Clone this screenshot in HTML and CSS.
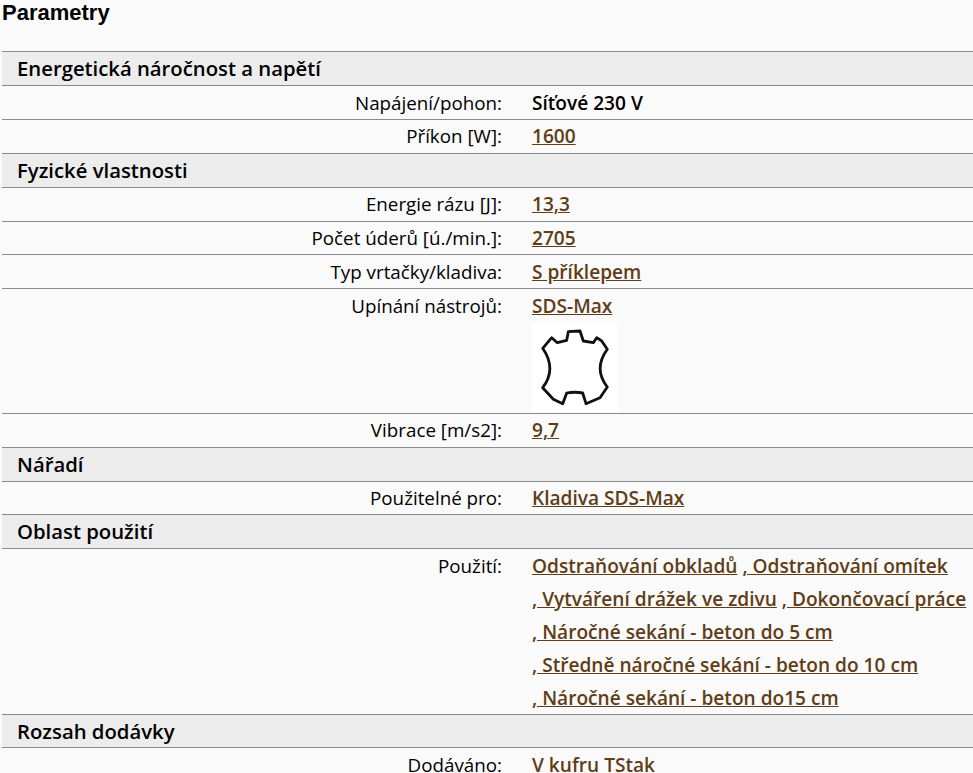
FILE: index.html
```html
<!DOCTYPE html>
<html lang="cs">
<head>
<meta charset="utf-8">
<title>Parametry</title>
<link rel="stylesheet" href="styles.css">
</head>
<body>
<h2 class="title">Parametry</h2>
<div class="params">
<div class="group">Energetická náročnost a napětí</div>
<div class="row"><div class="label">Napájení/pohon:</div><div class="value">Síťové 230 V</div></div>
<div class="row"><div class="label">Příkon [W]:</div><div class="value"><a href="#">1600</a></div></div>
<div class="group">Fyzické vlastnosti</div>
<div class="row"><div class="label">Energie rázu [J]:</div><div class="value"><a href="#">13,3</a></div></div>
<div class="row"><div class="label">Počet úderů [ú./min.]:</div><div class="value"><a href="#">2705</a></div></div>
<div class="row"><div class="label">Typ vrtačky/kladiva:</div><div class="value"><a href="#">S příklepem</a></div></div>
<div class="row row-image"><div class="label">Upínání nástrojů:</div><div class="value"><a href="#">SDS-Max</a>
<svg class="shank" width="86" height="89" viewBox="0 0 86 89" role="img" aria-label="SDS-Max">
<rect width="86" height="89" fill="#fff"/>
<path class="shank-line" d="M36.3 8.7 L48 8 L51.3 18 L61.3 19.7 L64.7 14.7 L69.7 18 L75.3 26.3 Q61 46 75.3 64 L68 74.7 L54 80.7 L50.7 70 Q42.5 68.5 34.7 70 L30.7 80.7 L21.3 76.3 L10.7 64.7 Q25 46 10.7 25.3 L19.7 14.7 L25.3 19.7 L34.7 17.3 Z"/>
</svg></div></div>
<div class="row"><div class="label">Vibrace [m/s2]:</div><div class="value"><a href="#">9,7</a></div></div>
<div class="group">Nářadí</div>
<div class="row"><div class="label">Použitelné pro:</div><div class="value"><a href="#">Kladiva SDS-Max</a></div></div>
<div class="group">Oblast použití</div>
<div class="row row-multi"><div class="label">Použití:</div><div class="value"><a href="#">Odstraňování obkladů</a> <a href="#">, Odstraňování omítek</a> <a href="#">, Vytváření drážek ve zdivu</a> <a href="#">, Dokončovací práce</a> <a href="#">, Náročné sekání - beton do 5 cm</a> <a href="#">, Středně náročné sekání - beton do 10 cm</a> <a href="#">, Náročné sekání - beton do15 cm</a></div></div>
<div class="group">Rozsah dodávky</div>
<div class="row"><div class="label">Dodáváno:</div><div class="value"><a href="#">V kufru TStak</a></div></div>
</div>
</body>
</html>
```
FILE: styles.css
```css
html, body {
  margin: 0;
  padding: 0;
  background: #fafafa;
  overflow: hidden;
}
body {
  font-family: "Open Sans", sans-serif;
  color: #000;
  height: 773px;
}
.title {
  margin: 0;
  padding: 0 0 0 2px;
  height: 51.3px;
  font-family: "Liberation Sans", Arial, sans-serif;
  font-size: 22px;
  line-height: 26px;
  font-weight: 700;
}
.params {
  margin-left: 2px;
}
.group, .row {
  box-sizing: border-box;
  height: 33.85px;
  border-top: 1px solid #8a8a8a;
}
.group {
  background: #ececec;
  padding-left: 15px;
  font-size: 20.3px;
  font-weight: 600;
  line-height: 33px;
}
.row {
  display: grid;
  grid-template-columns: 515px 1fr;
  line-height: 33px;
}
.row-image { height: 124.75px; }
.row-multi { height: 165.2px; }
.label {
  text-align: right;
  font-size: 18.8px;
  padding: 0.4px 15px 0 0;
}
.value {
  font-size: 19.1px;
  font-weight: 600;
  padding: 0.4px 0 0 15px;
}
.value a {
  color: #5f3d16;
  text-decoration: underline;
  white-space: nowrap;
}
.shank {
  display: block;
  margin-top: 0.6px;
}
.shank-line {
  fill: none;
  stroke: #111;
  stroke-width: 2.8;
  stroke-linejoin: round;
  filter: blur(0.5px);
}
```
